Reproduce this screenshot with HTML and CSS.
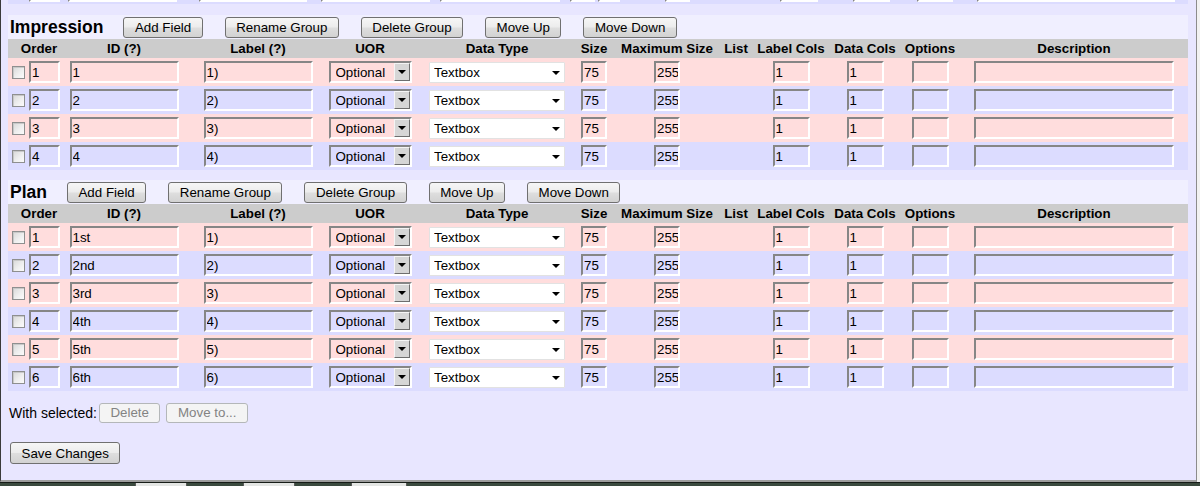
FILE: index.html
```html
<!DOCTYPE html>
<html>
<head>
<meta charset="utf-8">
<title>Field Groups</title>
<link rel="stylesheet" href="styles.css">
</head>
<body>
<div class="frame">
  <div class="remnant">
    <span class="seg s1"></span><span class="seg s2"></span><span class="seg s3"></span><span class="seg s4"></span><span class="seg s5"></span><span class="seg s6"></span><span class="seg s7"></span><span class="seg s8"></span><span class="seg s9"></span><span class="seg s10"></span><span class="seg s11"></span><span class="seg s12"></span>
  </div>

  <div class="group">
    <div class="ghead">
      <h2>Impression</h2>
      <button class="btn">Add Field</button>
      <button class="btn">Rename Group</button>
      <button class="btn">Delete Group</button>
      <button class="btn">Move Up</button>
      <button class="btn">Move Down</button>
    </div>
    <table class="grid">
      <colgroup>
        <col class="w1"><col class="w2"><col class="w3"><col class="w4"><col class="w5"><col class="w6"><col class="w7"><col class="w8"><col class="w9"><col class="w10"><col class="w11"><col class="w12">
      </colgroup>
      <tr>
        <th class="k-order">Order</th><th class="k-id">ID (?)</th><th class="k-label">Label (?)</th><th>UOR</th><th>Data Type</th><th>Size</th><th>Maximum Size</th><th>List</th><th>Label Cols</th><th>Data Cols</th><th>Options</th><th>Description</th>
      </tr>
      <tr class="p">
        <td class="k-order"><input type="checkbox" class="chk"><input class="t w-order" value="1"></td>
        <td class="k-id"><input class="t w-id" value="1"></td>
        <td class="k-label"><input class="t w-id" value="1)"></td>
        <td><span class="uor"><select class="uor-sel"><option>Optional</option></select></span></td>
        <td><span class="dt"><select class="dt-sel"><option>Textbox</option></select></span></td>
        <td><input class="t w-size" value="75"></td>
        <td><input class="t w-size" value="255"></td>
        <td></td>
        <td><input class="t w-cols" value="1"></td>
        <td><input class="t w-cols" value="1"></td>
        <td><input class="t w-cols" value=""></td>
        <td><input class="t w-desc" value=""></td>
      </tr>
      <tr class="b">
        <td class="k-order"><input type="checkbox" class="chk"><input class="t w-order" value="2"></td>
        <td class="k-id"><input class="t w-id" value="2"></td>
        <td class="k-label"><input class="t w-id" value="2)"></td>
        <td><span class="uor"><select class="uor-sel"><option>Optional</option></select></span></td>
        <td><span class="dt"><select class="dt-sel"><option>Textbox</option></select></span></td>
        <td><input class="t w-size" value="75"></td>
        <td><input class="t w-size" value="255"></td>
        <td></td>
        <td><input class="t w-cols" value="1"></td>
        <td><input class="t w-cols" value="1"></td>
        <td><input class="t w-cols" value=""></td>
        <td><input class="t w-desc" value=""></td>
      </tr>
      <tr class="p">
        <td class="k-order"><input type="checkbox" class="chk"><input class="t w-order" value="3"></td>
        <td class="k-id"><input class="t w-id" value="3"></td>
        <td class="k-label"><input class="t w-id" value="3)"></td>
        <td><span class="uor"><select class="uor-sel"><option>Optional</option></select></span></td>
        <td><span class="dt"><select class="dt-sel"><option>Textbox</option></select></span></td>
        <td><input class="t w-size" value="75"></td>
        <td><input class="t w-size" value="255"></td>
        <td></td>
        <td><input class="t w-cols" value="1"></td>
        <td><input class="t w-cols" value="1"></td>
        <td><input class="t w-cols" value=""></td>
        <td><input class="t w-desc" value=""></td>
      </tr>
      <tr class="b">
        <td class="k-order"><input type="checkbox" class="chk"><input class="t w-order" value="4"></td>
        <td class="k-id"><input class="t w-id" value="4"></td>
        <td class="k-label"><input class="t w-id" value="4)"></td>
        <td><span class="uor"><select class="uor-sel"><option>Optional</option></select></span></td>
        <td><span class="dt"><select class="dt-sel"><option>Textbox</option></select></span></td>
        <td><input class="t w-size" value="75"></td>
        <td><input class="t w-size" value="255"></td>
        <td></td>
        <td><input class="t w-cols" value="1"></td>
        <td><input class="t w-cols" value="1"></td>
        <td><input class="t w-cols" value=""></td>
        <td><input class="t w-desc" value=""></td>
      </tr>
    </table>
  </div>

  <div class="group">
    <div class="ghead">
      <h2>Plan</h2>
      <button class="btn">Add Field</button>
      <button class="btn">Rename Group</button>
      <button class="btn">Delete Group</button>
      <button class="btn">Move Up</button>
      <button class="btn">Move Down</button>
    </div>
    <table class="grid">
      <colgroup>
        <col class="w1"><col class="w2"><col class="w3"><col class="w4"><col class="w5"><col class="w6"><col class="w7"><col class="w8"><col class="w9"><col class="w10"><col class="w11"><col class="w12">
      </colgroup>
      <tr>
        <th class="k-order">Order</th><th class="k-id">ID (?)</th><th class="k-label">Label (?)</th><th>UOR</th><th>Data Type</th><th>Size</th><th>Maximum Size</th><th>List</th><th>Label Cols</th><th>Data Cols</th><th>Options</th><th>Description</th>
      </tr>
      <tr class="p">
        <td class="k-order"><input type="checkbox" class="chk"><input class="t w-order" value="1"></td>
        <td class="k-id"><input class="t w-id" value="1st"></td>
        <td class="k-label"><input class="t w-id" value="1)"></td>
        <td><span class="uor"><select class="uor-sel"><option>Optional</option></select></span></td>
        <td><span class="dt"><select class="dt-sel"><option>Textbox</option></select></span></td>
        <td><input class="t w-size" value="75"></td>
        <td><input class="t w-size" value="255"></td>
        <td></td>
        <td><input class="t w-cols" value="1"></td>
        <td><input class="t w-cols" value="1"></td>
        <td><input class="t w-cols" value=""></td>
        <td><input class="t w-desc" value=""></td>
      </tr>
      <tr class="b">
        <td class="k-order"><input type="checkbox" class="chk"><input class="t w-order" value="2"></td>
        <td class="k-id"><input class="t w-id" value="2nd"></td>
        <td class="k-label"><input class="t w-id" value="2)"></td>
        <td><span class="uor"><select class="uor-sel"><option>Optional</option></select></span></td>
        <td><span class="dt"><select class="dt-sel"><option>Textbox</option></select></span></td>
        <td><input class="t w-size" value="75"></td>
        <td><input class="t w-size" value="255"></td>
        <td></td>
        <td><input class="t w-cols" value="1"></td>
        <td><input class="t w-cols" value="1"></td>
        <td><input class="t w-cols" value=""></td>
        <td><input class="t w-desc" value=""></td>
      </tr>
      <tr class="p">
        <td class="k-order"><input type="checkbox" class="chk"><input class="t w-order" value="3"></td>
        <td class="k-id"><input class="t w-id" value="3rd"></td>
        <td class="k-label"><input class="t w-id" value="3)"></td>
        <td><span class="uor"><select class="uor-sel"><option>Optional</option></select></span></td>
        <td><span class="dt"><select class="dt-sel"><option>Textbox</option></select></span></td>
        <td><input class="t w-size" value="75"></td>
        <td><input class="t w-size" value="255"></td>
        <td></td>
        <td><input class="t w-cols" value="1"></td>
        <td><input class="t w-cols" value="1"></td>
        <td><input class="t w-cols" value=""></td>
        <td><input class="t w-desc" value=""></td>
      </tr>
      <tr class="b">
        <td class="k-order"><input type="checkbox" class="chk"><input class="t w-order" value="4"></td>
        <td class="k-id"><input class="t w-id" value="4th"></td>
        <td class="k-label"><input class="t w-id" value="4)"></td>
        <td><span class="uor"><select class="uor-sel"><option>Optional</option></select></span></td>
        <td><span class="dt"><select class="dt-sel"><option>Textbox</option></select></span></td>
        <td><input class="t w-size" value="75"></td>
        <td><input class="t w-size" value="255"></td>
        <td></td>
        <td><input class="t w-cols" value="1"></td>
        <td><input class="t w-cols" value="1"></td>
        <td><input class="t w-cols" value=""></td>
        <td><input class="t w-desc" value=""></td>
      </tr>
      <tr class="p">
        <td class="k-order"><input type="checkbox" class="chk"><input class="t w-order" value="5"></td>
        <td class="k-id"><input class="t w-id" value="5th"></td>
        <td class="k-label"><input class="t w-id" value="5)"></td>
        <td><span class="uor"><select class="uor-sel"><option>Optional</option></select></span></td>
        <td><span class="dt"><select class="dt-sel"><option>Textbox</option></select></span></td>
        <td><input class="t w-size" value="75"></td>
        <td><input class="t w-size" value="255"></td>
        <td></td>
        <td><input class="t w-cols" value="1"></td>
        <td><input class="t w-cols" value="1"></td>
        <td><input class="t w-cols" value=""></td>
        <td><input class="t w-desc" value=""></td>
      </tr>
      <tr class="b">
        <td class="k-order"><input type="checkbox" class="chk"><input class="t w-order" value="6"></td>
        <td class="k-id"><input class="t w-id" value="6th"></td>
        <td class="k-label"><input class="t w-id" value="6)"></td>
        <td><span class="uor"><select class="uor-sel"><option>Optional</option></select></span></td>
        <td><span class="dt"><select class="dt-sel"><option>Textbox</option></select></span></td>
        <td><input class="t w-size" value="75"></td>
        <td><input class="t w-size" value="255"></td>
        <td></td>
        <td><input class="t w-cols" value="1"></td>
        <td><input class="t w-cols" value="1"></td>
        <td><input class="t w-cols" value=""></td>
        <td><input class="t w-desc" value=""></td>
      </tr>
    </table>
  </div>

  <div class="actions">
    <span class="with">With selected:</span>
    <button class="btn-off" disabled>Delete</button>
    <button class="btn-off second" disabled>Move to...</button>
  </div>
  <button class="btn save">Save Changes</button>
</div>
<div class="taskbar">
  <span class="tb tb1"></span><span class="tb tb2"></span><span class="tb tb3"></span>
</div>
</body>
</html>
```

FILE: styles.css
```css
html, body {
  margin: 0;
  padding: 0;
}
body {
  width: 1200px;
  height: 486px;
  overflow: hidden;
  background: #f2f2f2;
  font-family: "Liberation Sans", Arial, sans-serif;
  font-size: 13.33px;
  color: #000;
}

.frame {
  width: 1197px;
  height: 482px;
  box-sizing: border-box;
  border-left: 1px solid #3a3a3a;
  border-right: 1px solid #8c8c8c;
  border-bottom: 2px solid #9d9d9d;
  background: #e8e6ff;
  padding-left: 7px;
  overflow: hidden;
}

/* tail of the previous group, cut off at the top */
.remnant {
  width: 1180px;
  height: 4px;
  background: #dcdcff;
  display: flex;
  align-items: flex-start;
  margin-bottom: 11px;
}
.seg {
  display: block;
  height: 2px;
  box-sizing: border-box;
  border-left: 2px solid #868686;
  border-right: 2px solid #fff;
  border-bottom: 2px solid #fff;
}
.s1 { margin-left: 21px; width: 31px; }
.s2 { margin-left: 8px; width: 109px; }
.s3 { margin-left: 22px; width: 108px; }
.s4 { margin-left: 14px; width: 109px; }
.s5 { margin-left: 10px; width: 120px; }
.s6 { margin-left: 10px; width: 25px; }
.s7 { margin-left: 3px; width: 22px; }
.s8 { margin-left: 45px; width: 25px; }
.s9 { margin-left: 90px; width: 38px; }
.s10 { margin-left: 35px; width: 37px; }
.s11 { margin-left: 27px; width: 36px; }
.s12 { margin-left: 24px; width: 198px; }

.group {
  width: 1180px;
}
.group + .group {
  margin-top: 10px;
}

.ghead {
  height: 24px;
  background: #f0efff;
  display: flex;
  align-items: center;
  gap: 22px;
  padding-left: 2px;
}
.ghead h2 {
  margin: 0 -2px 0 0;
  font-size: 17.5px;
  font-weight: bold;
  line-height: 20px;
}

.btn {
  height: 21px;
  box-sizing: border-box;
  padding: 0 10.5px;
  margin: 0;
  font-family: "Liberation Sans", Arial, sans-serif;
  font-size: 13.33px;
  color: #000;
  border: 1px solid #707070;
  border-radius: 3px;
  background: linear-gradient(#f6f6f6 0%, #ececec 48%, #dedede 52%, #d2d2d2 100%);
  line-height: 17px;
}

.grid {
  width: 1180px;
  border-collapse: collapse;
  border-spacing: 0;
  table-layout: fixed;
}
.w1 { width: 56px; }
.w2 { width: 126px; }
.w3 { width: 130px; }
.w4 { width: 100px; }
.w5 { width: 154px; }
.w6 { width: 40px; }
.w7 { width: 106px; }
.w8 { width: 32px; }
.w9 { width: 78px; }
.w10 { width: 70px; }
.w11 { width: 60px; }
.w12 { width: 228px; }

.grid th {
  background: #cccccc;
  height: 19px;
  padding: 0;
  font-size: 13.33px;
  font-weight: bold;
  text-align: center;
  vertical-align: middle;
  white-space: nowrap;
  line-height: 15px;
}
.grid td {
  height: 28px;
  padding: 0;
  text-align: center;
  vertical-align: middle;
  white-space: nowrap;
  line-height: 15px;
}
.grid th.k-order { padding-left: 6px; }
.grid td.k-order { text-align: left; padding-left: 4px; }
.grid .k-id { padding-right: 6px; }
.grid .k-label { padding-left: 6px; }

.grid tr.p td { background: #ffdddd; }
.grid tr.b td { background: #dcdcff; }

.t {
  box-sizing: border-box;
  height: 22px;
  margin: 0;
  padding: 0 0 0 1px;
  border: 2px solid;
  border-color: #868686 #ffffff #ffffff #868686;
  background: transparent;
  font-family: "Liberation Sans", Arial, sans-serif;
  font-size: 13.33px;
  color: #000;
  vertical-align: middle;
  outline: none;
}
.w-order { width: 31px; margin-left: 4px; }
.w-id { width: 109px; }
.w-size { width: 26px; }
.w-cols { width: 37px; }
.w-desc { width: 200px; }

.chk {
  -webkit-appearance: none;
  appearance: none;
  width: 13px;
  height: 13px;
  margin: 0;
  box-sizing: border-box;
  border: 1px solid #8e8f8f;
  background: linear-gradient(135deg, #d8d8d8 0%, #f0f0f0 60%, #fbfbfb 100%);
  box-shadow: inset 1px 1px 0 #c8c8c8;
  vertical-align: middle;
}

.uor {
  position: relative;
  display: inline-block;
  vertical-align: middle;
}
.uor-sel {
  -webkit-appearance: none;
  appearance: none;
  display: block;
  width: 83px;
  height: 22px;
  box-sizing: border-box;
  margin: 0;
  padding: 0 0 0 5px;
  border: 2px solid;
  border-color: #868686 #ffffff #ffffff #868686;
  border-radius: 0;
  background: transparent;
  font-family: "Liberation Sans", Arial, sans-serif;
  font-size: 13.33px;
  color: #000;
  outline: none;
}
.uor::before {
  content: "";
  position: absolute;
  top: 2px;
  right: 2px;
  width: 16px;
  height: 18px;
  box-sizing: border-box;
  background: #d6d6d6;
  border: 1px solid;
  border-color: #f4f4f4 #6e6e6e #6e6e6e #f4f4f4;
  pointer-events: none;
}
.uor::after {
  content: "";
  position: absolute;
  top: 9px;
  right: 6px;
  width: 0;
  height: 0;
  border-left: 4px solid transparent;
  border-right: 4px solid transparent;
  border-top: 4px solid #000;
  pointer-events: none;
}

.dt {
  position: relative;
  display: inline-block;
  vertical-align: middle;
}
.dt-sel {
  -webkit-appearance: none;
  appearance: none;
  display: block;
  width: 136px;
  height: 21px;
  box-sizing: border-box;
  margin: 0;
  padding: 0 0 0 4px;
  border: 1px solid #e2e2e2;
  border-radius: 1px;
  background: #ffffff;
  font-family: "Liberation Sans", Arial, sans-serif;
  font-size: 13.33px;
  color: #000;
  outline: none;
}
.dt::after {
  content: "";
  position: absolute;
  top: 9px;
  right: 5px;
  width: 0;
  height: 0;
  border-left: 4px solid transparent;
  border-right: 4px solid transparent;
  border-top: 4px solid #000;
  pointer-events: none;
}

.actions {
  display: flex;
  align-items: center;
  margin-top: 12px;
  padding-left: 1px;
  height: 20px;
}
.with {
  font-size: 14px;
}
.btn-off {
  height: 20px;
  box-sizing: border-box;
  padding: 0 10.5px;
  margin: 0 0 0 2px;
  font-family: "Liberation Sans", Arial, sans-serif;
  font-size: 13.33px;
  color: #838383;
  border: 1px solid #b4b7b9;
  border-radius: 3px;
  background: #f4f4f4;
  line-height: 16px;
}
.btn-off.second {
  margin-left: 6px;
}

.save {
  display: block;
  height: 22px;
  margin: 19px 0 0 2px;
}

.taskbar {
  width: 1200px;
  height: 4px;
  box-sizing: border-box;
  border-top: 1px solid #161c17;
  background: #3a4a3e;
  display: flex;
}
.tb {
  display: block;
  height: 3px;
  background: #e4e6e4;
  border-left: 1px solid #5a5a5a;
  border-right: 1px solid #5a5a5a;
}
.tb1 { margin-left: 135px; width: 50px; }
.tb2 { margin-left: 56px; width: 50px; }
.tb3 { margin-left: 56px; width: 54px; }
```
